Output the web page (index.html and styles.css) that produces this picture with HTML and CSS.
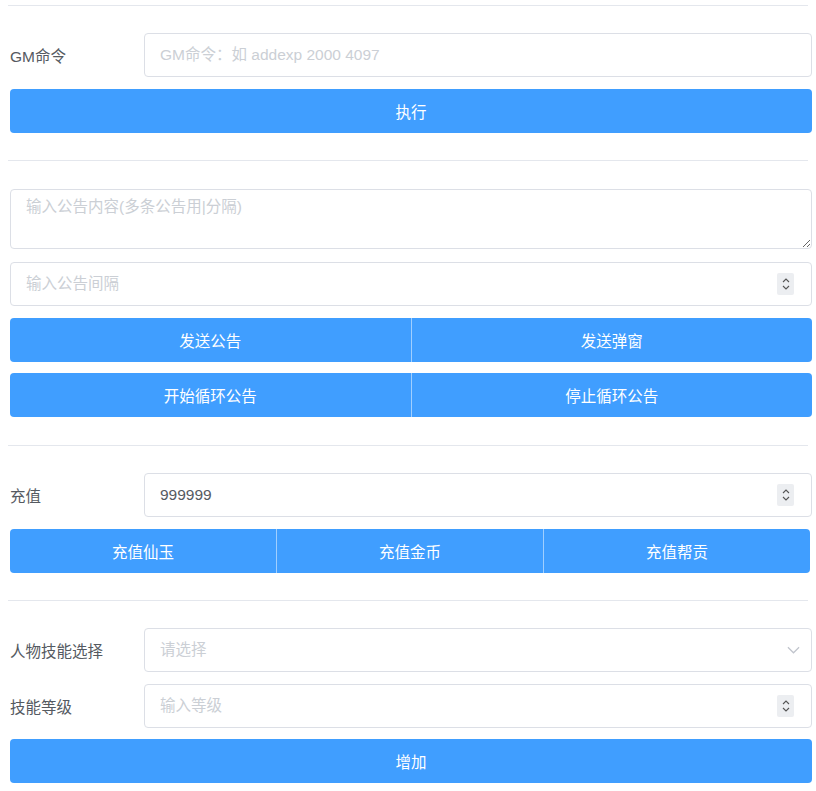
FILE: index.html
```html
<!DOCTYPE html>
<html lang="zh-CN">
<head>
<meta charset="utf-8">
<title>GM</title>
<link rel="stylesheet" href="styles.css">
</head>
<body>
<div class="page">
  <div class="divider"></div>
  <div class="row">
    <label class="label">GM命令</label>
    <div class="field"><input class="input" type="text" placeholder="GM命令：如 addexp 2000 4097"></div>
  </div>
  <button class="btn btn-full">执行</button>

  <div class="divider"></div>
  <textarea class="textarea" placeholder="输入公告内容(多条公告用|分隔)"></textarea>
  <div class="field spaced">
    <input class="input" type="text" placeholder="输入公告间隔">
    <span class="spin"><svg viewBox="0 0 10 16" width="10" height="16"><path d="M2 6 L5 3 L8 6 M2 10 L5 13 L8 10" fill="none" stroke="#555" stroke-width="1.1"/></svg></span>
  </div>
  <div class="group">
    <button class="btn">发送公告</button>
    <button class="btn">发送弹窗</button>
  </div>
  <div class="group group-last">
    <button class="btn">开始循环公告</button>
    <button class="btn">停止循环公告</button>
  </div>

  <div class="divider"></div>
  <div class="row">
    <label class="label">充值</label>
    <div class="field">
      <input class="input" type="text" value="999999">
      <span class="spin"><svg viewBox="0 0 10 16" width="10" height="16"><path d="M2 6 L5 3 L8 6 M2 10 L5 13 L8 10" fill="none" stroke="#555" stroke-width="1.1"/></svg></span>
    </div>
  </div>
  <div class="group group-narrow group-last">
    <button class="btn">充值仙玉</button>
    <button class="btn">充值金币</button>
    <button class="btn">充值帮贡</button>
  </div>

  <div class="divider"></div>
  <div class="row">
    <label class="label">人物技能选择</label>
    <div class="field">
      <input class="input" type="text" placeholder="请选择" readonly>
      <span class="arrow"><svg viewBox="0 0 14 8" width="13" height="8"><path d="M1 1 L7 7 L13 1" fill="none" stroke="#c0c4cc" stroke-width="1.3"/></svg></span>
    </div>
  </div>
  <div class="row row-last">
    <label class="label">技能等级</label>
    <div class="field">
      <input class="input" type="text" placeholder="输入等级">
      <span class="spin"><svg viewBox="0 0 10 16" width="10" height="16"><path d="M2 6 L5 3 L8 6 M2 10 L5 13 L8 10" fill="none" stroke="#555" stroke-width="1.1"/></svg></span>
    </div>
  </div>
  <button class="btn btn-full">增加</button>
</div>
</body>
</html>
```
FILE: styles.css
```css
* { box-sizing: border-box; }
html, body { margin: 0; padding: 0; background: #fff; }
body {
  font-family: "Liberation Sans", "Noto Sans CJK SC", sans-serif;
  font-size: 15.5px;
  color: #606266;
}
.page {
  padding: 5px 4px 0 10px;
  display: flex;
  flex-direction: column;
}
.divider {
  height: 1px;
  background: #e4e7ed;
  margin: 0 4px 27px -2px;
}
.row {
  display: flex;
  align-items: center;
  height: 44px;
  margin-bottom: 12px;
}
.row-last { margin-bottom: 11px; }
.label {
  width: 134px;
  flex: none;
  color: #555a61;
}
.field {
  position: relative;
  flex: 1;
  height: 44px;
}
.spaced { flex: none; margin-bottom: 12px; }
.input {
  width: 100%;
  height: 44px;
  border: 1px solid #dcdfe6;
  border-radius: 4px;
  padding: 0 15px;
  font-family: "Liberation Sans", "Noto Sans CJK SC", sans-serif;
  font-size: 15.5px;
  color: #555a61;
  background: #fff;
  outline: none;
}
.input::placeholder, .textarea::placeholder { color: #cbcfd5; }
.textarea {
  display: block;
  width: 100%;
  height: 60px;
  border: 1px solid #dcdfe6;
  border-radius: 4px;
  padding: 5px 15px;
  font-family: "Liberation Sans", "Noto Sans CJK SC", sans-serif;
  font-size: 15.5px;
  line-height: 1.5;
  color: #606266;
  margin: 1px 0 13px;
  outline: none;
  resize: vertical;
}
.spin {
  position: absolute;
  right: 18px;
  top: 11px;
  width: 17px;
  height: 22px;
  background: #eceef1;
  border-radius: 2px;
  display: flex;
  align-items: center;
  justify-content: center;
}
.arrow {
  position: absolute;
  right: 12px;
  top: 18px;
  display: flex;
}
.btn {
  height: 44px;
  border: none;
  border-radius: 4px;
  background: #409eff;
  color: #fff;
  font-family: "Liberation Sans", "Noto Sans CJK SC", sans-serif;
  font-size: 15.5px;
  cursor: pointer;
}
.btn-full { width: 100%; margin-bottom: 27px; }
.group {
  display: flex;
  margin-bottom: 11px;
}
.group-last { margin-bottom: 28px; }
.group .btn {
  flex: 1;
  border-radius: 0;
}
.group .btn + .btn { border-left: 1px solid rgba(255,255,255,0.5); }
.group .btn:first-child { border-radius: 4px 0 0 4px; }
.group .btn:last-child { border-radius: 0 4px 4px 0; }
.group-narrow { margin-right: 2px; margin-bottom: 27px; }
```
